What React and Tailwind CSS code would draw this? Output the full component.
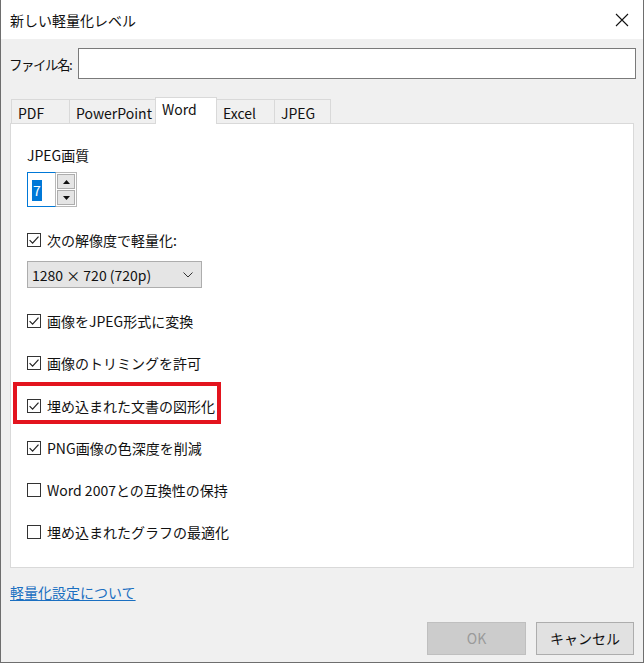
import React from "react";

const font = { fontFamily: '"Noto Sans CJK JP", "Noto Sans", sans-serif' };

function Check({ checked }) {
  return (
    <span className="w-[14px] h-[14px] border border-[#333333] bg-white flex items-center justify-center shrink-0">
      {checked && (
        <svg width="12" height="12" viewBox="0 0 12 12">
          <path d="M1.6 6.2 L4.6 9.2 L10.5 2.6" fill="none" stroke="#222" strokeWidth="1.2" />
        </svg>
      )}
    </span>
  );
}

function Row({ checked, label, className = "" }) {
  return (
    <div className={"flex items-center h-[20px] shrink-0 " + className}>
      <Check checked={checked} />
      <span className="ml-[6px] text-[14px] leading-[20px] text-[#111] whitespace-nowrap">{label}</span>
    </div>
  );
}

export default function App() {
  const tabs = [
    { name: "PDF", w: "w-[59px]" },
    { name: "PowerPoint", w: "w-[87px]" },
    { name: "Word", w: "w-[62px]", active: true },
    { name: "Excel", w: "w-[59px]" },
    { name: "JPEG", w: "w-[57px]" },
  ];
  return (
    <div style={font} className="w-[644px] h-[663px] bg-[#f0f0f0] border-x border-b border-[#6e6e6e] flex flex-col text-[#111]">
      {/* Title bar */}
      <div className="h-[39px] bg-white flex items-center justify-between pl-[9px] pr-[14px] shrink-0">
        <span className="text-[14px] leading-[20px] text-[#111] whitespace-nowrap">新しい軽量化レベル</span>
        <svg width="14" height="14" viewBox="0 0 14 14">
          <path d="M1 1 L13 13 M13 1 L1 13" stroke="#111" strokeWidth="1.1" />
        </svg>
      </div>

      {/* File name row */}
      <div className="flex items-center mt-[9px] pl-[8px] pr-[7px] shrink-0">
        <span className="w-[69px] text-[13.5px] tracking-[-1.5px] leading-[20px] whitespace-nowrap shrink-0">ファイル名:</span>
        <div className="flex-1 h-[31px] bg-white border border-[#7a7a7a]" />
      </div>

      {/* Tabs */}
      <div className="flex items-end mt-[18px] pl-[10px] h-[26px] shrink-0">
        {tabs.map((t) =>
          t.active ? (
            <div
              key={t.name}
              className={t.w + " h-[27px] -mb-px -ml-px bg-white border border-b-0 border-[#d9d9d9] relative z-10 pl-[6px] text-[14px] leading-[22px] whitespace-nowrap"}
            >
              {t.name}
            </div>
          ) : (
            <div
              key={t.name}
              className={t.w + " h-[24px] border border-b-0 border-[#d9d9d9] -ml-px first:ml-0 pl-[6px] text-[14px] leading-[24px] pt-[1px] whitespace-nowrap"}
            >
              {t.name}
            </div>
          )
        )}
      </div>

      {/* Panel */}
      <div className="mx-[9px] h-[445px] shrink-0 bg-white border border-[#d9d9d9] pl-[16px] pt-[21px] flex flex-col">
        <div className="text-[14px] leading-[20px]">JPEG画質</div>

        {/* spin box */}
        <div className="flex mt-[7px] h-[35px] shrink-0">
          <div className="w-[29px] h-[35px] border border-[#0078d7] border-r-[#b8b8b8] pt-[4px] pl-[4px]">
            <span className="bg-[#0078d7] text-white text-[14px] leading-[21px] inline-block px-[1px]">7</span>
          </div>
          <div className="w-[21px] h-[35px] border border-[#b8b8b8] border-l-0 flex flex-col bg-white p-[1px] gap-[1px]">
            <div className="flex-1 bg-[#e5e5e5] border border-[#adadad] flex items-center justify-center">
              <svg width="7" height="4" viewBox="0 0 7 4"><path d="M0 4 L3.5 0 L7 4 Z" fill="#111" /></svg>
            </div>
            <div className="flex-1 bg-[#e5e5e5] border border-[#adadad] flex items-center justify-center">
              <svg width="7" height="4" viewBox="0 0 7 4"><path d="M0 0 L7 0 L3.5 4 Z" fill="#111" /></svg>
            </div>
          </div>
        </div>

        <Row checked label="次の解像度で軽量化:" className="mt-[23px]" />

        {/* dropdown */}
        <div className="mt-[11px] w-[175px] h-[27px] shrink-0 bg-[#e5e5e5] border border-[#adadad] flex items-center justify-between pl-[4px] pr-[8px]">
          <span className="text-[14px] leading-[20px] whitespace-nowrap">1280 × 720 (720p)</span>
          <svg width="10" height="6" viewBox="0 0 10 6">
            <path d="M0.5 0.5 L5 5 L9.5 0.5" fill="none" stroke="#333" strokeWidth="1" />
          </svg>
        </div>

        <Row checked label="画像をJPEG形式に変換" className="mt-[23px]" />
        <Row checked label="画像のトリミングを許可" className="mt-[22px]" />
        <div className="relative mt-[23px] shrink-0">
          <Row checked label="埋め込まれた文書の図形化" />
          <div className="absolute left-[-14px] top-[-14px] w-[208px] h-[42px] border-[4px] border-[#e3141e]" />
        </div>
        <Row checked label="PNG画像の色深度を削減" className="mt-[22px]" />
        <Row checked={false} label="Word 2007との互換性の保持" className="mt-[22px]" />
        <Row checked={false} label="埋め込まれたグラフの最適化" className="mt-[22px]" />
      </div>

      {/* link */}
      <div className="pl-[9px] mt-[11px] shrink-0">
        <span className="text-[14px] leading-[20px] text-[#1a6fc1] underline underline-offset-2 whitespace-nowrap">軽量化設定について</span>
      </div>

      {/* buttons */}
      <div className="flex justify-end gap-[10px] pr-[9px] mt-[19px] shrink-0">
        <div className="w-[99px] h-[33px] bg-[#cccccc] border border-[#bfbfbf] flex items-center justify-center text-[14px] text-[#9a9a9a]">
          OK
        </div>
        <div className="w-[98px] h-[33px] bg-[#e1e1e1] border border-[#adadad] flex items-center justify-center text-[14px] text-[#111] whitespace-nowrap">
          キャンセル
        </div>
      </div>
    </div>
  );
}
